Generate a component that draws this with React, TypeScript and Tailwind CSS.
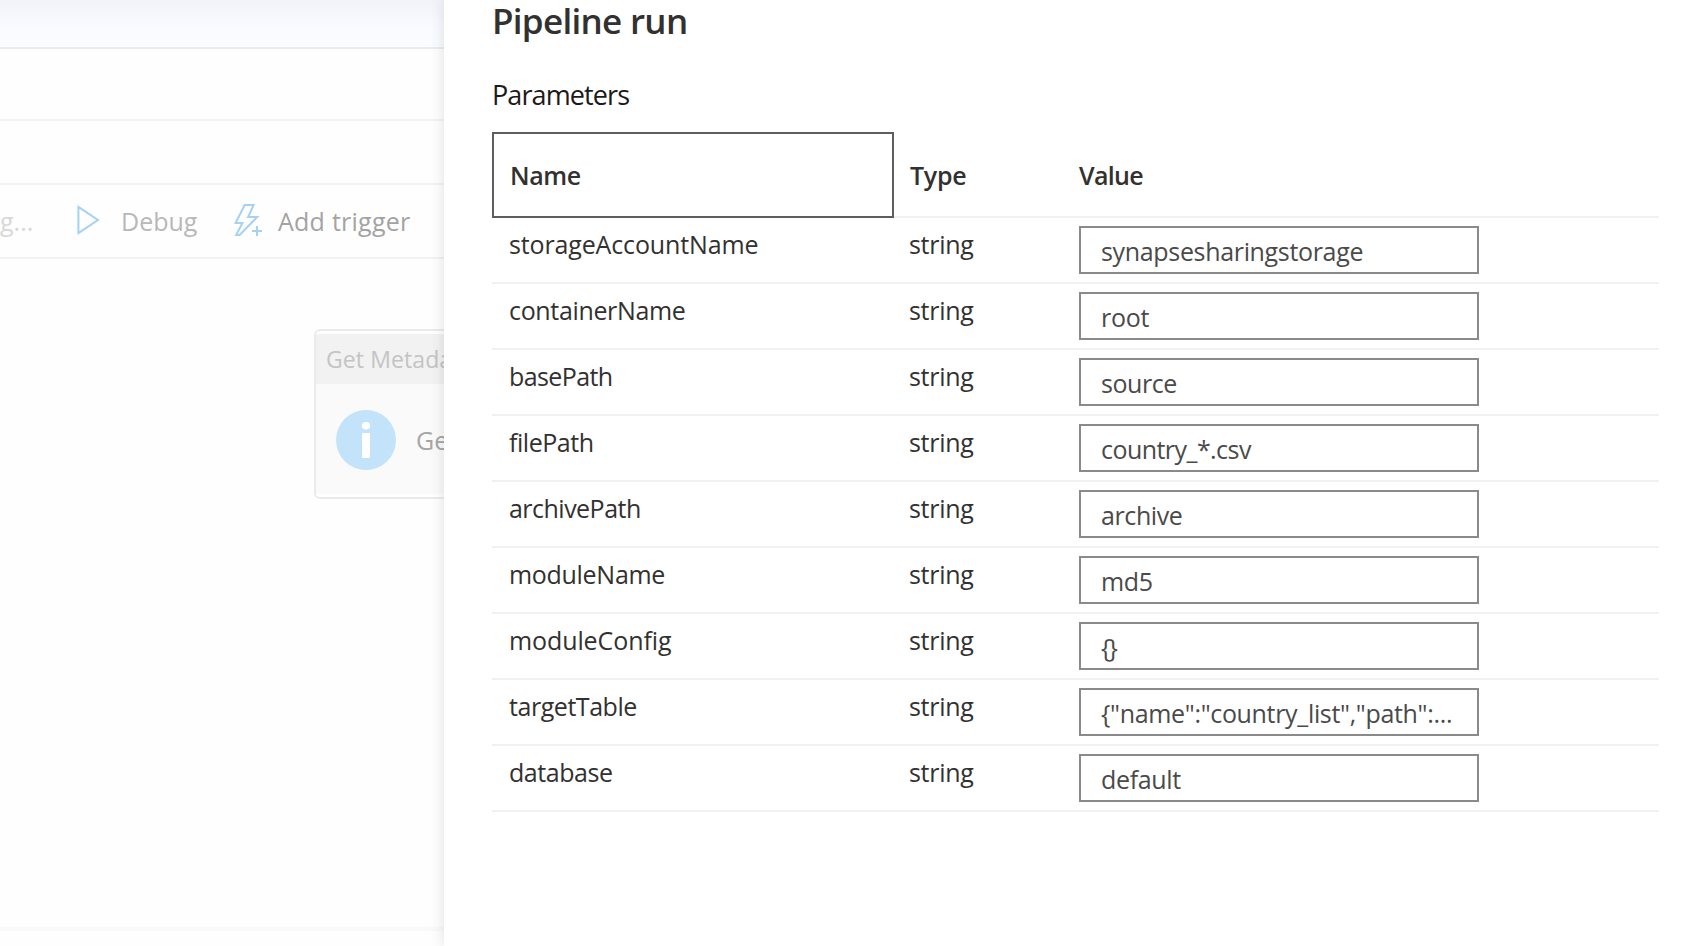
const rows = [
  { name: 'storageAccountName', tracking: 'tracking-[-0.14px]', value: 'synapsesharingstorage', valueTracking: 'tracking-[-0.33px]' },
  { name: 'containerName', tracking: 'tracking-[-0.34px]', value: 'root', valueTracking: 'tracking-[-0.25px]' },
  { name: 'basePath', tracking: 'tracking-[-0.6px]', value: 'source', valueTracking: 'tracking-[-0.45px]' },
  { name: 'filePath', tracking: 'tracking-[-0.45px]', value: 'country_*.csv', valueTracking: 'tracking-[-0.55px]' },
  { name: 'archivePath', tracking: 'tracking-[-0.52px]', value: 'archive', valueTracking: 'tracking-[-0.4px]' },
  { name: 'moduleName', tracking: 'tracking-[-0.3px]', value: 'md5', valueTracking: 'tracking-[-0.33px]' },
  { name: 'moduleConfig', tracking: 'tracking-[-0.1px]', value: '{}', valueTracking: 'tracking-[-1.8px]' },
  { name: 'targetTable', tracking: 'tracking-[-0.45px]', value: '{"name":"country_list","path":...', valueTracking: 'tracking-[-0.33px]' },
  { name: 'database', tracking: 'tracking-[-0.45px]', value: 'default', valueTracking: 'tracking-[-0.33px]' },
];

function DebugIcon() {
  return (
    <svg className="h-8 w-6 shrink-0" viewBox="0 0 24 32" fill="none" stroke="#a6d1f2" strokeWidth="2">
      <path d="M2.4 2.8V29.2L22 16Z" />
    </svg>
  );
}

function TriggerIcon() {
  return (
    <svg className="h-8 w-7 shrink-0" viewBox="0 0 28 32" fill="none" stroke="#a6d1f2" strokeWidth="2">
      <path d="M10.6 1H19.6L14.2 13H23.2L5.6 31H2.2L8.4 19H1.6Z" />
      <path d="M18 27H28M23 22V32" />
    </svg>
  );
}

function InfoIcon() {
  return (
    <svg className="h-15 w-15 shrink-0" viewBox="0 0 60 60">
      <circle cx="30" cy="30" r="30" fill="#c3e3fa" />
      <ellipse cx="30" cy="15.7" rx="4.2" ry="3.8" fill="#fff" />
      <rect x="26" y="23" width="8" height="25" rx="1.2" fill="#fff" />
    </svg>
  );
}

function Workspace() {
  return (
    <div className="flex w-[444px] shrink-0 flex-col overflow-hidden bg-[#fefefe] whitespace-nowrap">
      <div className="h-[49px] shrink-0 border-b-2 border-[#ebebed] bg-linear-to-b from-[#f2f3f8] via-[#f8faff] to-[#fafdff]" />
      <div className="h-[72px] shrink-0 border-b-2 border-[#f3f3f3]" />
      <div className="h-16 shrink-0 border-b-2 border-[#f3f3f3]" />
      <div className="flex h-[74px] shrink-0 items-start border-b-2 border-[#f2f2f2] pt-[19px] text-[25px] leading-8">
        <span className="w-[76px] pt-px text-[#d8d8d8]">g...</span>
        <DebugIcon />
        <span className="w-[113px] pt-px pl-[21px] text-[#b8b8b8]">Debug</span>
        <span className="w-[21px]" />
        <TriggerIcon />
        <span className="pt-px pl-4 tracking-[0.25px] text-[#a3a3a3]">Add trigger</span>
      </div>
      <div className="h-[672px] shrink-0 border-b-4 border-[#f9f9f9] pt-[70px] pl-[314px]">
        <div className="flex h-[170px] w-[300px] flex-col rounded-md border-2 border-[#ebebeb] bg-white py-[3px]">
          <div className="h-[50px] bg-[#f2f2f2] pt-[9px] pl-[10px] text-[23px] leading-8 tracking-[0.1px] text-[#c4c4c4]">Get Metadata</div>
          <div className="flex flex-1 items-center bg-[#fafafa] pt-px pl-5">
            <InfoIcon />
            <span className="pl-5 text-[25px] leading-8 text-[#a6a6a6]">Get</span>
          </div>
        </div>
      </div>
    </div>
  );
}

export default function App() {
  return (
    <div className="flex h-[946px] w-full overflow-hidden bg-white font-['Open_Sans','Noto_Sans',sans-serif]">
      <Workspace />
      <div className="z-10 flex-1 bg-white pl-12 text-[#323130] shadow-[0_0_14px_rgba(0,0,0,0.12)]">
        <h1 className="h-[72px] text-[35px] leading-[42px] font-semibold tracking-[-0.7px]">Pipeline run</h1>
        <h2 className="h-[60px] pt-[3px] text-[27px] leading-[40px] tracking-[-0.9px] text-[#1b1a19]">Parameters</h2>
        <div className="w-[1167px]">
          <div className="flex h-[86px] items-stretch border-b-2 border-[#f1f1f1] text-[25px] leading-[32px] font-semibold">
            <div className="-mb-[2px] flex w-[402px] items-center border-2 border-[#605e5c] pl-4 tracking-[-0.4px]">Name</div>
            <div className="flex w-[185px] items-center pt-[2px] pl-4 tracking-[-0.25px]">Type</div>
            <div className="flex items-center pt-[2px] tracking-[-0.65px]">Value</div>
          </div>
          {rows.map((row) => (
            <div key={row.name} className="flex h-[66px] border-b-2 border-[#f1f1f1] text-[25px] leading-[32px]">
              <div className={`w-[400px] pt-[10px] pl-[17px] ${row.tracking}`}>{row.name}</div>
              <div className="w-[187px] pt-[10px] pl-[17px] tracking-[-0.3px]">string</div>
              <div className={`mt-2 h-12 w-[400px] border-2 border-[#8a8a8a] pt-[7px] pl-5 whitespace-nowrap text-[#4a4a4a] ${row.valueTracking}`}>{row.value}</div>
            </div>
          ))}
        </div>
      </div>
    </div>
  );
}
